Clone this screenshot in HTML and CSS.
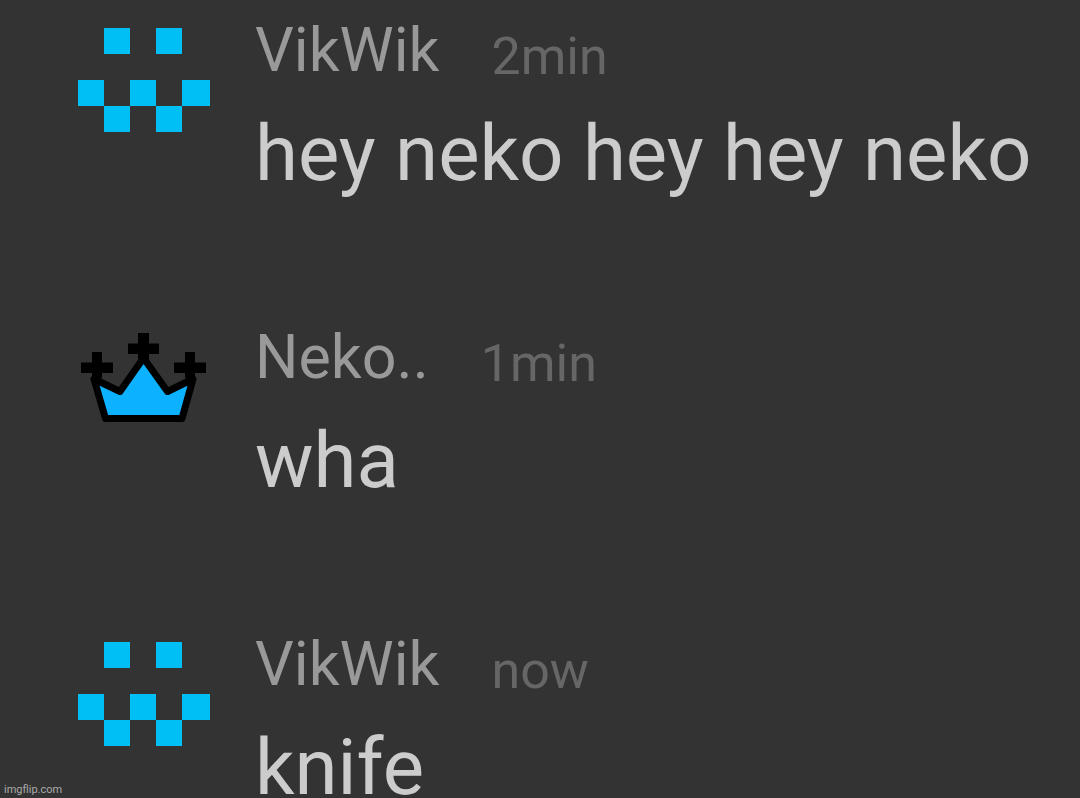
FILE: index.html
```html
<!DOCTYPE html>
<html lang="en">
<head>
    <meta charset="utf-8">
    <title>Chat</title>
    <link rel="stylesheet" href="styles.css">
</head>
<body>
    <main class="chat">
        <!-- VikWik -->
        <article class="message">
            <svg class="avatar" viewBox="0 0 132 104" role="img" aria-label="VikWik avatar">
                <path class="pixels" d="M26 0h26v26H26zM78 0h26v26H78zM0 52h26v26H0zM52 52h26v26H52zM104 52h28v26h-28zM26 78h26v26H26zM78 78h26v26H78z"/>
            </svg>
            <div class="content">
                <header class="meta">
                    <span class="name">VikWik</span>
                    <time class="time">2min</time>
                </header>
                <p class="text">hey neko hey hey neko</p>
            </div>
        </article>

        <!-- Neko -->
        <article class="message">
            <svg class="avatar" viewBox="0 0 132 104" role="img" aria-label="Neko avatar">
                <path class="crown" d="M16 44L42 56.500L65.500 23L89.500 56.500L115 44L104 83.500H27.500Z"/>
                <path class="crosses" d="M60-2h11v26H60zM50 8.500h31v10.500H50zM14 17h10v26H14zM3 27.500h32v10.500H3zM107 17h10v26h-10zM96 27.500h32v10.500H96z"/>
            </svg>
            <div class="content">
                <header class="meta">
                    <span class="name">Neko..</span>
                    <time class="time">1min</time>
                </header>
                <p class="text">wha</p>
            </div>
        </article>

        <!-- VikWik -->
        <article class="message">
            <svg class="avatar" viewBox="0 0 132 104" role="img" aria-label="VikWik avatar">
                <path class="pixels" d="M26 0h26v26H26zM78 0h26v26H78zM0 52h26v26H0zM52 52h26v26H52zM104 52h28v26h-28zM26 78h26v26H26zM78 78h26v26H78z"/>
            </svg>
            <div class="content">
                <header class="meta">
                    <span class="name">VikWik</span>
                    <time class="time">now</time>
                </header>
                <p class="text">knife</p>
            </div>
        </article>
    </main>

    <div class="watermark">imgflip.com</div>
</body>
</html>
```
FILE: styles.css
```css
body {
    margin: 0;
    height: 100vh;
    overflow: hidden;
    position: relative;
    background-color: #333;
    font-family: Roboto, sans-serif;
}
.chat {
    display: flex;
    flex-direction: column;
    gap: 121px;
    padding: 14px 0 0 78px;
}
.message {
    display: flex;
    align-items: flex-start;
    gap: 45px;
}
.avatar {
    flex: none;
    width: 132px;
    margin-top: 14px;
    overflow: visible;
}
.pixels {
    fill: #00bff5;
}
.crown {
    fill: #0cb2ff;
    stroke: #000;
    stroke-width: 7;
    stroke-linejoin: round;
}
.crosses {
    fill: #000;
}
.content {
    flex: 1;
}
.meta {
    display: flex;
    align-items: flex-end;
    gap: 52px;
    margin-bottom: 22px;
}
.name {
    color: #999;
    font-size: 61px;
    line-height: 72px;
}
.time {
    color: #666;
    font-size: 52px;
    line-height: 58px;
}
.text {
    margin: 0;
    color: #ccc;
    font-size: 78px;
    line-height: 92px;
}
.watermark {
    position: absolute;
    left: 4px;
    bottom: 1px;
    color: #aaa;
    font-size: 11px;
    line-height: 14px;
}
```
